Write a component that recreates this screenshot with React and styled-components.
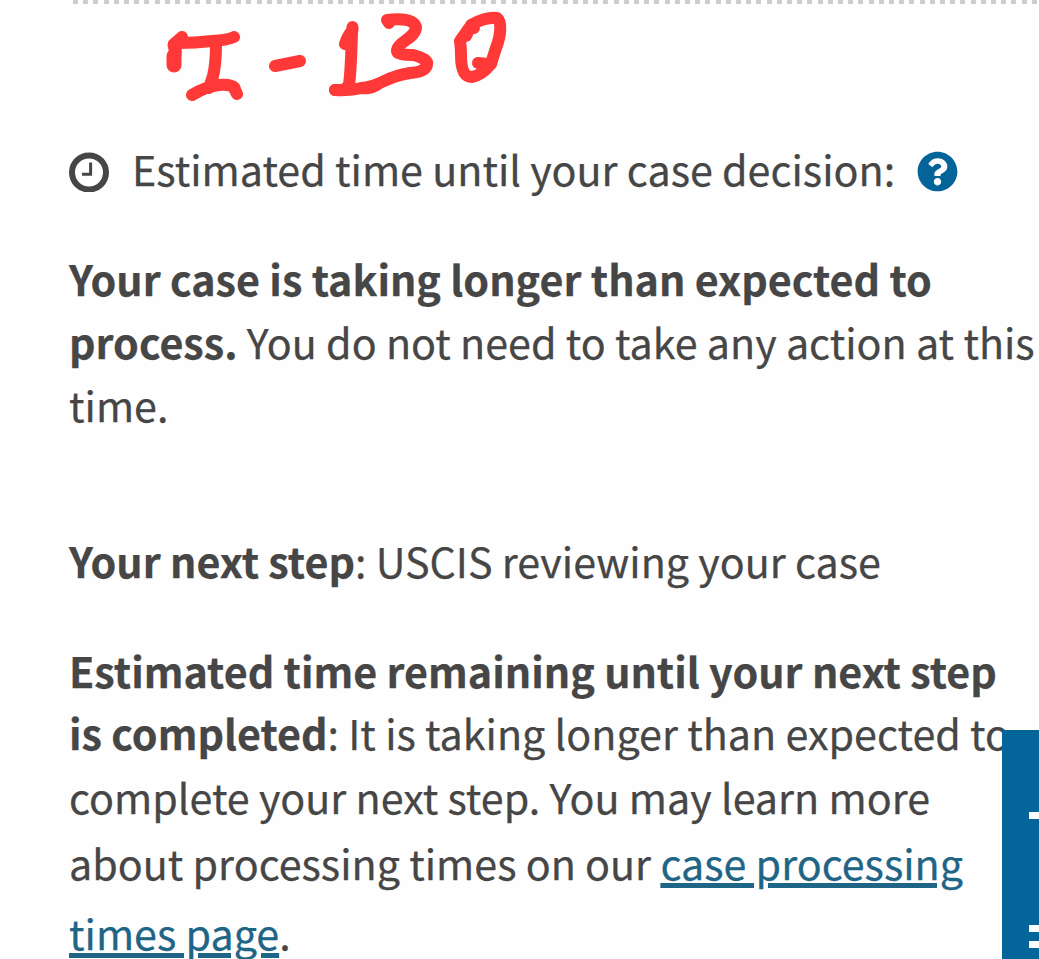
import React from 'react';
import styled, {createGlobalStyle} from 'styled-components';
import {FaQuestionCircle} from 'react-icons/fa';

const GlobalStyle = createGlobalStyle`
  body {
    margin: 0;
    background: #fefefe;
    overflow: hidden;
  }
`;

const Page = styled.main`
  position: relative;
  box-sizing: border-box;
  width: 1039px;
  height: 959px;
  overflow: hidden;
  background: #fefefe;
  color: #464646;
  font-family: "Noto Sans CJK SC", "Noto Sans", sans-serif;
  font-size: 41.25px;
  -webkit-text-stroke: 0.25px;
`;

const DottedRule = styled.div`
  height: 4px;
  margin-left: 73px;
  background: repeating-linear-gradient(to right, #cdcdcd 0 5px, transparent 5px 10.2px);
`;

const Content = styled.section`
  display: flex;
  flex-direction: column;
  padding-left: 69px;
`;

const Heading = styled.div`
  display: flex;
  align-items: center;
  height: 64px;
  margin-top: 30px;
`;

const HeadingText = styled.span`
  width: 762px;
  padding-bottom: 8px;
  margin: 0 23px 0 23px;
  line-height: 58px;
  white-space: nowrap;
`;

const Paragraph = styled.p`
  margin: ${props => props.$top}px 0 0;
`;

const Line = styled.span`
  display: block;
  height: ${props => props.$height || 64}px;
  line-height: 58px;
  white-space: nowrap;
`;

const Strong = styled.strong`
  font-weight: 700;
`;

const Link = styled.a`
  color: #1f6586;
  text-decoration: underline;
  text-decoration-thickness: 4.5px;
  text-underline-offset: 2.5px;
`;

const HelpIcon = styled(FaQuestionCircle)`
  width: 41px;
  height: 41px;
  margin-bottom: 2px;
  color: #046499;
`;

const Handwriting = styled.svg`
  display: block;
  width: 360px;
  height: 100px;
  margin: 6px 0 0 91px;
`;

// floating button on the right edge, cut off by the screen
const SideTab = styled.aside`
  position: absolute;
  right: 0;
  bottom: 0;
  width: 37px;
  height: 229px;
  background: #04659b;
  display: flex;
  flex-direction: column;
  align-items: flex-end;
`;

const Bar = styled.i`
  width: 10px;
  height: 7px;
  margin-top: ${props => props.$top}px;
  background: #fff;
`;

function ClockIcon(){
  return (
    <svg width="40" height="40" viewBox="0 0 40 40" fill="none" stroke="#464646">
      <circle cx="20" cy="20.500" r="17" strokeWidth="6"/>
      <path d="M21.6 10.5V22.2H13" strokeWidth="3"/>
    </svg>
  )
}

function FormNote(){
  return (
    <Handwriting viewBox="160 10 360 100" fill="none" stroke="#ff3838" strokeWidth="12" strokeLinecap="round" strokeLinejoin="round">
      <path d="M182 37L174 44L178 43Q195 43 212 41Q228 40 234 37"/>
      <path d="M174 45Q176 50 175 55" strokeWidth="13"/>
      <path d="M174 56V65" strokeWidth="15"/>
      <path d="M216 44Q216 64 213 76L209 88M192 95Q207 86 219 85Q235 84 235 90L237 94" />
      <path d="M275 66L300 61"/>
      <path d="M352.500 27V30Q347 37 345 44H350L352 31Q351 70 349 85L344 90H335"/>
      <path d="M335 90Q350 91 362 88Q374 86 382 82Q396 75 410 73Q425 72 427 65Q429 59 413 55Q397 55 397 51C397 42 416 38 416 27Q413 17 387 20L389 23"/>
      <path d="M362 88Q371 89 378 84"/>
      <path d="M474 28H469L465 34L460 41Q461 47 461 55C461 72 465 77 472 77C479 76 486 70 491 64Q493 57 496 48C501 35 502 22 497 18C488 17 480 20 471 25L466 36M478 63L488 64"/>
    </Handwriting>
  )
}

function App(){
  return (
    <>
      <GlobalStyle />
      <Page>
        <DottedRule />
        <Content>
          <FormNote />
          <Heading>
            <ClockIcon />
            <HeadingText>Estimated time until your case decision:</HeadingText>
            <HelpIcon />
          </Heading>
          <Paragraph $top={45}>
            <Line $height={63}><Strong>Your case is taking longer than expected to</Strong></Line>
            <Line $height={63}><Strong>process.</Strong> You do not need to take any action at this</Line>
            <Line>time.</Line>
          </Paragraph>
          <Paragraph $top={92}>
            <Line><Strong>Your next step</Strong>: USCIS reviewing your case</Line>
          </Paragraph>
          <Paragraph $top={46}>
            <Line $height={62}><Strong>Estimated time remaining until your next step</Strong></Line>
            <Line><Strong>is completed</Strong>: It is taking longer than expected to</Line>
            <Line $height={66}>complete your next step. You may learn more</Line>
            <Line $height={70}>about processing times on our <Link>case processing</Link></Line>
            <Line><Link>times page</Link>.</Line>
          </Paragraph>
        </Content>
        <SideTab>
          <Bar $top={82}/>
          <Bar $top={106}/>
          <Bar $top={9}/>
        </SideTab>
      </Page>
    </>
  )
}

export default App;
